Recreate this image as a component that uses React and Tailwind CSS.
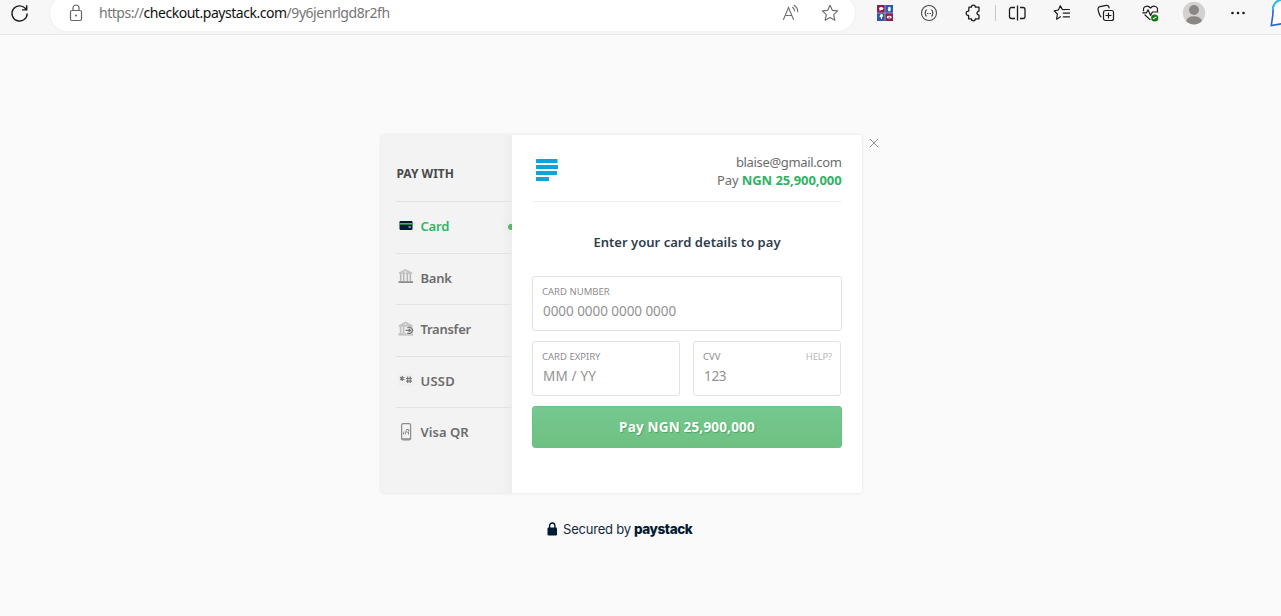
const PuzzleIcon = () => (
  <svg width="18" height="18" viewBox="0 0 18 18" fill="none" stroke="#1c1c1c" strokeWidth="1.3" strokeLinejoin="round">
    <path d="M5 3.200h2.400a2 2 0 0 1 4 0H15v3.900a2 2 0 0 0-1.200 3.600l1.200.4v3.700h-3.600a2 2 0 0 1-4 0H4.600v-3.400H4a2.100 2.100 0 1 1 .6-4.200Z" />
  </svg>
);

const HeartPulse = () => (
  <svg width="18" height="18" viewBox="0 0 18 18" fill="none" stroke="#1c1c1c" strokeWidth="1.2" strokeLinecap="round" strokeLinejoin="round">
    <path d="M1.600 6.800C.6 2.500 5.500.6 8.500 4c3-3.400 7.900-1.500 6.900 2.800M3 11l5 4.600M.8 8.800h3.700L6 5.800l2.600 5.700L10.400 8h5.400" />
    <circle cx="12.700" cy="14" r="3.600" fill="#0f7b0f" stroke="none" />
    <path d="m11.300 14.700 2.700-1.500" stroke="#fff" />
  </svg>
);

function Toolbar() {
  return (
    <header className="flex h-[35px] overflow-hidden border-b border-[#e9e9e9] bg-[#f7f7f7]">
      <div className="flex h-[26px] w-[50px] shrink-0 items-center pl-[10px]">
        <svg width="19" height="19" viewBox="0 0 19 19" fill="none" stroke="#1c1c1c" strokeWidth="1.4">
          <path d="M17.200 9.500a7.600 7.600 0 1 1-2-5.200l1.400 1.500M16.700 1.200v4.700H12" />
        </svg>
      </div>
      <div className="-mt-[5px] flex h-[36px] w-[805px] shrink-0 items-center rounded-full bg-white pl-[18px] pr-[16px] shadow-[0_0_3px_#e9e9e9]">
        <svg width="16" height="18" viewBox="0 0 16 18" fill="none" stroke="#666" strokeWidth="1.2" className="-mt-[1px]">
          <rect x="2.500" y="6.500" width="11" height="10" rx="1.5" />
          <path d="M5 6.500V4a3 3 0 0 1 6 0v2.500" />
          <circle cx="8" cy="11.500" r="1" fill="#666" stroke="none" />
        </svg>
        <span className="ml-[15px] -mt-[2px] whitespace-nowrap text-[14px] tracking-[-0.465px] text-[#757575]">
          https://<span className="text-[#111]">checkout.paystack.com</span>/9y6jenrlgd8r2fh
        </span>
        <div className="ml-auto flex items-center gap-[21px]">
          <svg width="18" height="18" viewBox="0 0 18 18" fill="none" stroke="#707070" strokeWidth="1.1" strokeLinecap="round">
            <path d="m1.500 15.500 5-12 5 12M3.200 11.500h6.600M10.500 3.300a4.500 4.500 0 0 1 2 3.700M12 1.300a7.500 7.500 0 0 1 3.700 6.500" />
          </svg>
          <svg width="18" height="18" viewBox="0 0 18 18" fill="none" stroke="#707070" strokeWidth="1.2" strokeLinejoin="round">
            <path d="m9 1.300 2.300 5 5.400.6-4 3.700 1.100 5.600L9 13.500l-4.800 2.700 1.100-5.600-4-3.700 5.400-.6Z" />
          </svg>
        </div>
      </div>
      <div className="flex h-[26px] shrink-0 items-center">
        <svg className="ml-[22px]" width="16" height="16" viewBox="0 0 16 16">
          <path fill="#8b1f4e" d="M0 0h8v8H0zM8 8h8v8H8z" />
          <path fill="#2c59b0" d="M8 0h8v8H8zM0 8h8v8H0z" />
          <path stroke="#b9b3c4" strokeWidth=".7" d="M8 0v16M0 8h16" />
          <g fill="#fff">
            <ellipse cx="4.200" cy="3.600" rx="2.200" ry="1.500" />
            <path d="m3 4.500-.8 1.700 2-1.200Z" />
            <path d="M10.300 3.800l.9.700V2.300l.6-.2.400-.7.500.7.800.2.300 2-.6 2h-1.700ZM3 10.500a1.500 1.500 0 0 1 3 0c0 1-1 1.500-1 2.500v1H4v-1.500L2.500 12Z" />
            <ellipse cx="12.200" cy="12.200" rx="2.500" ry="1.400" />
          </g>
          <circle cx="12.200" cy="12.200" r=".7" fill="#8b1f4e" />
        </svg>
        <svg className="ml-[27px]" width="18" height="18" viewBox="0 0 18 18" fill="none" stroke="#4b4b4b" strokeWidth="1.1">
          <circle cx="9" cy="9" r="7.500" />
          <path d="M7 6H6.500q-1 0-1 1v1q0 1-1 1 1 0 1 1v1q0 1 1 1H7M11 6h.5q1 0 1 1v1q0 1 1 1-1 0-1 1v1q0 1-1 1H11" />
          <path d="M7 9.500h4" strokeDasharray="1 .5" />
        </svg>
        <span className="ml-[26px]"><PuzzleIcon /></span>
        <span className="ml-[13px] h-[16px] w-px bg-[#c9c9c9]" />
        <svg className="ml-[12px]" width="18" height="18" viewBox="0 0 18 18" fill="none" stroke="#1c1c1c" strokeWidth="1.3">
          <path d="M7 3.500H3.500a2 2 0 0 0-2 2v7a2 2 0 0 0 2 2H7M12 3.500h3a2 2 0 0 1 2 2v7a2 2 0 0 1-2 2h-3M9.500 1.500v15" />
        </svg>
        <svg className="ml-[27px]" width="18" height="18" viewBox="0 0 18 18" fill="none" stroke="#1c1c1c" strokeWidth="1.2" strokeLinecap="round" strokeLinejoin="round">
          <path d="M11.500 5.700 9.300 5.400 7.300 1.800 5.400 6 1.200 6.800l3.200 3.200-.8 5.200 3.900-2.400M11.700 5.500h4.800M10.300 9.200h6.200M10.300 12.800h6.200" />
        </svg>
        <svg className="ml-[26px]" width="18" height="18" viewBox="0 0 18 18" fill="none" stroke="#1c1c1c" strokeWidth="1.2" strokeLinecap="round">
          <rect x="6.500" y="6.500" width="10" height="10" rx="2" />
          <path d="M11.500 9v5M9 11.500h5M4 12.800C2.600 12.400 1.100 6.400 1 5c0-1.400.8-2 2-2.300l6.300-1.300c1.400-.2 2.300.5 2.600 1.600l.2.900" />
        </svg>
        <span className="ml-[27px]"><HeartPulse /></span>
        <svg className="ml-[22px]" width="24" height="24" viewBox="0 0 24 24">
          <circle cx="12" cy="12" r="11.200" fill="#d4d2d0" />
          <circle cx="12" cy="9" r="5" fill="#8b8785" />
          <path d="M4 20a8.200 6 0 0 1 16 0A11 11 0 0 1 4 20Z" fill="#8b8785" />
        </svg>
        <svg className="ml-[23px]" width="18" height="18" viewBox="0 0 18 18" fill="#1c1c1c">
          <circle cx="3.500" cy="9" r="1.300" /><circle cx="9" cy="9" r="1.300" /><circle cx="14.500" cy="9" r="1.300" />
        </svg>
        <svg className="ml-[21px]" width="15" height="30" viewBox="0 0 15 30">
          <path d="M16 1C8 2 4.500 7 5 12c.3 5-1 10-1.700 15.500L15 25.500" fill="#fff" stroke="#2862d7" strokeWidth="1.600" />
          <path d="M16 1C8 2 5 6 4.900 12" fill="none" stroke="#29c3ec" strokeWidth="1.800" />
          <path d="M13 12h2v8h-2z" fill="#aac6fb" />
        </svg>
      </div>
    </header>
  );
}

const Roof = () => <path d="M7.500 0 .8 3.600V5h13.400V3.600Z" fill="#c3c3c3" />;

const icons = {
  Card: (
    <svg width="16" height="16" viewBox="0 0 16 16">
      <rect x="1.500" y="3" width="13" height="9" rx="1.2" fill="#011b33" />
      <path d="M1.500 5h13v1.600h-13z" fill="#2bc84a" />
      <path d="M10.500 8.500h2.300v1h-2.300z" fill="#fff" />
    </svg>
  ),
  Bank: (
    <svg width="16" height="16" viewBox="0 0 16 16">
      <Roof />
      <path d="M2.700 5v7M5.700 5v7M9.300 5v7M12.300 5v7" stroke="#b5b5b5" strokeWidth="1.600" />
      <path d="M.5 12.200h14.500V14H.500z" fill="#8b8b8b" />
      <circle cx="7.500" cy="3" r=".9" fill="#f3f3f3" />
    </svg>
  ),
  Transfer: (
    <svg width="17" height="16" viewBox="0 0 17 16">
      <path d="M8 0 .8 4v1.500h14.800V4Z" fill="#c3c3c3" />
      <path d="M2.800 5v8M6 5v8M14 5v3" stroke="#c3c3c3" strokeWidth="2" />
      <path d="M.5 12.500h15.500V15H.500z" fill="#c3c3c3" />
      <circle cx="8" cy="3" r=".9" fill="#f3f3f3" />
      <circle cx="12" cy="9.500" r="4.500" fill="#f3f3f3" />
      <path d="M9.900 6.900a3.300 3.300 0 1 1 0 5.200M8 9.500h5M11.500 7.800l1.700 1.700-1.700 1.700" fill="none" stroke="#777" strokeWidth="1.400" />
    </svg>
  ),
  USSD: (
    <svg width="16" height="16" viewBox="0 0 16 16" fill="none" stroke="#777" strokeWidth="1.2">
      <path d="M0 2h16v12H0z" fill="#efefef" stroke="none" />
      <path d="M4.200 4v5M2 5.300l4.400 2.400M2 7.700l4.400-2.400M9.700 4.500v6.500M12.200 4.500v6.500M8 6.500h6M8 9.200h6" />
    </svg>
  ),
  "Visa QR": (
    <svg width="16" height="18" viewBox="0 0 16 18" fill="none">
      <rect x="3.600" y=".7" width="9" height="16.300" rx="1.500" stroke="#8c8c8c" strokeWidth="1.200" />
      <path d="M4 16h8.300" stroke="#8c8c8c" strokeWidth="1.600" />
      <path d="m5.300 11.500.8-3M7.300 11.500l1.200-5h2.300v2M9 9.200h2M10.500 9v2.500" stroke="#888" />
    </svg>
  ),
};

const methods = [
  { name: "Card", row: "h-[52px]", text: "text-[#2fb364] tracking-[-0.200px]" },
  { name: "Bank", row: "h-[51px]", text: "text-[#6c6c6c] tracking-[-0.200px]" },
  { name: "Transfer", row: "h-[52px]", text: "text-[#6c6c6c] tracking-[-0.270px]" },
  { name: "USSD", row: "h-[51px]", text: "text-[#6c6c6c] tracking-[0.250px]" },
  { name: "Visa QR", row: "h-[52px]", text: "text-[#6c6c6c] tracking-[0.050px]" },
];

function Sidebar() {
  return (
    <aside className="w-[131px] shrink-0 rounded-l bg-[#f3f3f3] bg-[linear-gradient(to_right,transparent_92%,#ededed)] pl-[15px] text-[13px] font-semibold leading-[18px]">
      <h2 className="h-[66px] pl-[0.500px] pt-[29.500px] text-[12px] font-bold tracking-[0px] text-[#4a4a4a]">PAY WITH</h2>
      <ul>
        {methods.map(({ name, row, text }) => (
          <li key={name} className={`mr-px flex items-center border-t border-[#e2e2e2] ${row}`}>
            <span className="ml-[2px] flex w-[16px] shrink-0 -translate-y-[2px]">{icons[name]}</span>
            <span className={`-mt-[3px] ml-[6.500px] whitespace-nowrap font-[560] ${text}`}>{name}</span>
            {name === "Card" && <span className="-mr-px -mt-[2px] ml-auto h-[6px] w-[4px] rounded-l-full bg-[#5cb369] shadow-[0_0_8px_#cce8d2]" />}
          </li>
        ))}
      </ul>
    </aside>
  );
}

function Field({ label, value, width, labelClass, valueClass, help }) {
  return (
    <div className={`h-[55px] rounded-[3px] border border-[#e2e2e2] bg-white px-[9px] pt-[8px] ${width}`}>
      <div className="flex justify-between text-[9.500px] leading-[13px] text-[#8d8d8d]">
        <span className={labelClass}>{label}</span>
        {help && <span className="-mr-px tracking-[-0.200px] text-[#b8b8b8]">HELP?</span>}
      </div>
      <div className={`mt-[4px] pl-[1px] text-[13.500px] leading-[18px] text-[#929292] ${valueClass}`}>{value}</div>
    </div>
  );
}

export default function App() {
  return (
    <div className="h-[616px] w-[1281px] overflow-hidden bg-[#fafafa] font-['Noto_Sans',sans-serif]">
      <Toolbar />
      <main className="flex flex-col pl-[381px] pt-[100px]">
        <div className="flex items-start">
          <div className="flex h-[358px] w-[481px] rounded shadow-[0_0_3px_#dcdcdc]">
            <Sidebar />
            <section className="w-[350px] rounded-r bg-white px-[20px]">
              <div className="flex h-[67px] justify-between border-b border-[#f0f0f0] pl-[4px] pt-[18px]">
                <svg className="mt-[6px]" width="22" height="23" viewBox="0 0 22 23" fill="#0ba4db">
                  <rect width="21.500" height="4" rx=".6" /><rect y="6" width="22" height="4" rx=".6" />
                  <rect y="12" width="21" height="4" rx=".6" /><rect y="18" width="13" height="4" rx=".6" />
                </svg>
                <div className="pr-[0.500px] text-right text-[13px] leading-[18px] text-[#6c6c6c]">
                  <div className="tracking-[-0.350px]">blaise@gmail.com</div>
                  <div className="tracking-[-0.080px]">Pay <b className="text-[#2fb364]">NGN 25,900,000</b></div>
                </div>
              </div>
              <h1 className="pt-[31px] text-center text-[13px] font-[580] leading-[18px] tracking-[0.030px] text-[#2f3d4d]">Enter your card details to pay</h1>
              <div className="mt-[25px] flex flex-col gap-[10px]">
                <Field label="CARD NUMBER" value="0000 0000 0000 0000" width="w-[310px]" labelClass="tracking-[0.020px]" valueClass="tracking-[-0.050px]" />
                <div className="flex gap-[13px]">
                  <Field label="CARD EXPIRY" value="MM / YY" width="w-[148px]" labelClass="tracking-[0px]" valueClass="tracking-[0.180px]" />
                  <Field label="CVV" value="123" width="w-[148px]" labelClass="tracking-[0px]" valueClass="tracking-[-0.300px]" help />
                </div>
                <button className="h-[42px] rounded-[3px] border border-[#68c286] bg-linear-to-b from-[#75c98f] to-[#6fc082] text-[13.500px] font-bold leading-[18px] tracking-[0.190px] text-white [text-shadow:1px_1px_1px_#4fa568]">
                  Pay NGN 25,900,000
                </button>
              </div>
            </section>
          </div>
          <svg className="ml-[7px] mt-[3px]" width="10" height="10" viewBox="0 0 10 10" stroke="#969696">
            <path d="m1 1 8 8M9 1 1 9" />
          </svg>
        </div>
        <footer className="mt-[27px] flex items-center pl-[166px] font-['Inter',sans-serif] text-[13px] leading-[18px] text-[#16283f]">
          <svg width="11" height="14" viewBox="0 0 11 14">
            <rect x=".5" y="5.500" width="9.500" height="8" rx="1" fill="#011b33" />
            <path d="M2.600 6V3.600a2.650 2.650 0 0 1 5.300 0V6" fill="none" stroke="#011b33" strokeWidth="1.400" />
          </svg>
          <span className="ml-[5px] tracking-[-0.200px]">Secured by</span>
          <span className="ml-[3px] text-[13.500px] font-extrabold tracking-[-0.400px] text-[#011b33]">paystack</span>
        </footer>
      </main>
    </div>
  );
}
